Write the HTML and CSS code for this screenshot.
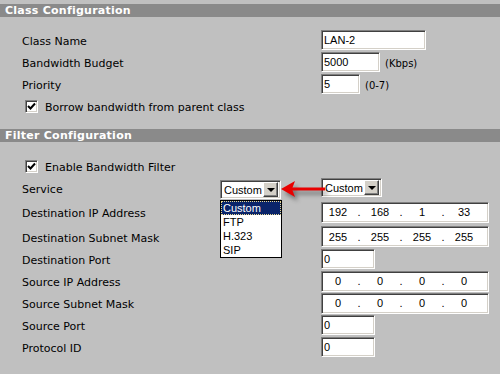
FILE: index.html
```html
<!DOCTYPE html>
<html lang="en">
<head>
    <meta charset="UTF-8">
    <title>Class Configuration</title>
    <link rel="stylesheet" href="styles.css">
</head>
<body>
    <div class="page">
        <div class="bar">Class Configuration</div>
        <div class="sec sec-class">
            <div class="row">
                <span class="lbl">Class Name</span>
                <input class="txt w-name" type="text" value="LAN-2">
            </div>
            <div class="row">
                <span class="lbl">Bandwidth Budget</span>
                <input class="txt w-bw" type="text" value="5000">
                <span class="unit">(Kbps)</span>
            </div>
            <div class="row">
                <span class="lbl">Priority</span>
                <input class="txt w-pri" type="text" value="5">
                <span class="unit">(0-7)</span>
            </div>
            <div class="row chk-row">
                <span class="chk"><svg width="9" height="9" viewBox="0 0 9 9"><path d="M1 4 L3.5 6.5 L8 1.5" fill="none" stroke="#000" stroke-width="2"/></svg></span>
                <span class="lbl-chk">Borrow bandwidth from parent class</span>
            </div>
        </div>

        <div class="bar">Filter Configuration</div>
        <div class="sec sec-filter">
            <div class="row chk-row">
                <span class="chk"><svg width="9" height="9" viewBox="0 0 9 9"><path d="M1 4 L3.5 6.5 L8 1.5" fill="none" stroke="#000" stroke-width="2"/></svg></span>
                <span class="lbl-chk">Enable Bandwidth Filter</span>
            </div>
            <div class="row svc-row">
                <span class="lbl lbl-svc">Service</span>
                <div class="sel sel-open">
                    <span class="sel-val">Custom</span>
                    <span class="sel-btn"><span class="tri"></span></span>
                    <ul class="sel-list">
                        <li class="on">Custom</li>
                        <li>FTP</li>
                        <li>H.323</li>
                        <li>SIP</li>
                    </ul>
                </div>
                <div class="sel sel-plain">
                    <span class="sel-val">Custom</span>
                    <span class="sel-btn"><span class="tri"></span></span>
                </div>
                <svg class="arrow" width="56" height="32" viewBox="0 0 56 32">
                    <rect x="15" y="10.5" width="34" height="3" fill="#e80000"/>
                    <polygon points="5,12 19,4 16,12 19,20" fill="#e80000"/>
                </svg>
            </div>
            <div class="row row-ip1">
                <span class="lbl">Destination IP Address</span>
                <div class="ip">
                    <span class="oct">192</span><span class="dot">.</span><span class="oct">168</span><span class="dot">.</span><span class="oct">1</span><span class="dot">.</span><span class="oct">33</span>
                </div>
            </div>
            <div class="row row-ip2">
                <span class="lbl">Destination Subnet Mask</span>
                <div class="ip">
                    <span class="oct">255</span><span class="dot">.</span><span class="oct">255</span><span class="dot">.</span><span class="oct">255</span><span class="dot">.</span><span class="oct">255</span>
                </div>
            </div>
            <div class="row">
                <span class="lbl">Destination Port</span>
                <input class="txt w-port" type="text" value="0">
            </div>
            <div class="row">
                <span class="lbl">Source IP Address</span>
                <div class="ip">
                    <span class="oct">0</span><span class="dot">.</span><span class="oct">0</span><span class="dot">.</span><span class="oct">0</span><span class="dot">.</span><span class="oct">0</span>
                </div>
            </div>
            <div class="row">
                <span class="lbl">Source Subnet Mask</span>
                <div class="ip">
                    <span class="oct">0</span><span class="dot">.</span><span class="oct">0</span><span class="dot">.</span><span class="oct">0</span><span class="dot">.</span><span class="oct">0</span>
                </div>
            </div>
            <div class="row">
                <span class="lbl">Source Port</span>
                <input class="txt w-port" type="text" value="0">
            </div>
            <div class="row">
                <span class="lbl">Protocol ID</span>
                <input class="txt w-port" type="text" value="0">
            </div>
        </div>
    </div>
</body>
</html>
```

FILE: styles.css
```css
body {
    margin: 0;
    background-color: #c0c0c0;
    font-family: "DejaVu Sans", Verdana, sans-serif;
    font-size: 11px;
    color: #000;
}

.page {
    padding-top: 4px;
}

.bar {
    height: 13px;
    line-height: 13px;
    padding-left: 5px;
    background-color: #8a8a8a;
    color: #fff;
    font-weight: bold;
    letter-spacing: 0.25px;
}

.sec-class {
    padding: 12px 0;
}

.sec-filter {
    padding-top: 13px;
}

.row {
    display: flex;
    align-items: center;
    height: 22px;
    padding-left: 22px;
    position: relative;
}

.lbl {
    width: 299px;
    flex: none;
    padding-top: 3px; /* baja un poco el texto */
}

.lbl-chk {
    padding-top: 3px;
}

.lbl-svc {
    width: 198px;
}

.unit {
    margin-left: 5px;
    font-size: 10px;
    padding-top: 2px;
}

/* campos de texto estilo windows clasico */
.txt, .ip, .sel {
    box-sizing: border-box;
    background-color: #fff;
    border: 1px solid;
    border-color: #808080 #fff #fff #808080;
    box-shadow: inset 1px 1px 0 #404040, inset -1px -1px 0 #d4d0c8;
}

.txt {
    height: 20px;
    margin: 0;
    padding: 0 0 0 2px;
    font-family: "Liberation Sans", Arial, sans-serif;
    font-size: 11px;
    color: #000;
    outline: none;
}

.w-name { width: 105px; }
.w-bw { width: 59px; }
.w-pri { width: 39px; }
.w-port { width: 54px; }

.chk-row {
    padding-left: 25px;
    gap: 7px;
}

.chk {
    box-sizing: border-box;
    width: 13px;
    height: 13px;
    display: flex;
    align-items: center;
    justify-content: center;
    background-color: #fff;
    border: 1px solid;
    border-color: #808080 #fff #fff #808080;
    box-shadow: inset 1px 1px 0 #404040, inset -1px -1px 0 #d4d0c8;
}

.ip {
    width: 168px;
    height: 21px;
    display: flex;
    align-items: center;
    padding-left: 1px;
    font-family: "Liberation Sans", Arial, sans-serif;
    font-size: 11px;
}

.oct {
    width: 30px;
    text-align: center;
}

.dot {
    width: 12px;
    text-align: center;
}

.row-ip1 {
    height: 26px;
}

.row-ip2 {
    height: 23px;
}

.sel {
    width: 61px;
    height: 19px;
    display: flex;
    align-items: center;
    justify-content: space-between;
    padding: 0 2px 0 3px;
    font-family: "Liberation Sans", Arial, sans-serif;
    font-size: 11px;
    position: relative;
    align-self: flex-start;
}

.sel-open {
    margin-top: 3px;
    width: 61px;
    margin-right: 40px;
}

.sel-plain {
    margin-top: 1px;
}

.sel-btn {
    box-sizing: border-box;
    width: 15px;
    height: 15px;
    display: flex;
    align-items: center;
    justify-content: center;
    background-color: #d4d0c8;
    border: 1px solid;
    border-color: #fff #404040 #404040 #fff;
    box-shadow: inset -1px -1px 0 #808080;
}

.tri {
    width: 0;
    height: 0;
    border-left: 4px solid transparent;
    border-right: 4px solid transparent;
    border-top: 4px solid #000;
    margin-top: 1px;
}

.sel-list {
    position: absolute;
    top: 19px;
    left: -1px;
    width: 62px;
    margin: 0;
    padding: 0;
    list-style: none;
    background-color: #fff;
    border: 1px solid #000;
    box-sizing: border-box;
    z-index: 2;
}

.sel-list li {
    height: 14px;
    line-height: 15px;
    padding-left: 2px;
}

.sel-list li.on {
    background-color: #0a246a;
    color: #fff;
    outline: 1px dotted #e8d890;
    outline-offset: -1px;
}

.arrow {
    position: absolute;
    left: 276px;
    top: 0;
    filter: drop-shadow(3px 4px 2px rgba(0, 0, 0, 0.4));
    z-index: 3;
}
```
